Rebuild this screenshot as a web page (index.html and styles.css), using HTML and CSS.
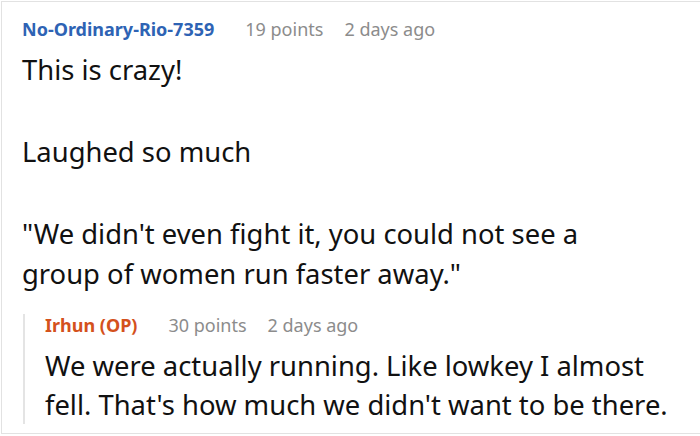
FILE: index.html
```html
<!DOCTYPE html>
<html>
<head>
<meta charset="utf-8">
<link rel="stylesheet" href="styles.css">
</head>
<body>
<div class="frame">
  <div class="comment">
    <div class="meta">
      <span class="author">No-Ordinary-Rio-7359</span>
      <span class="points">19 points</span>
      <span class="time">2 days ago</span>
    </div>
    <div class="body">
      <p>This is crazy!</p>
      <p>Laughed so much</p>
      <p>"We didn't even fight it, you could not see a group of women run faster away."</p>
    </div>
    <div class="reply">
      <div class="meta">
        <span class="author op">Irhun (OP)</span>
        <span class="points">30 points</span>
        <span class="time">2 days ago</span>
      </div>
      <div class="body">
        <p>We were actually running. Like lowkey I almost fell. That's how much we didn't want to be there.</p>
      </div>
    </div>
  </div>
</div>
</body>
</html>
```
FILE: styles.css
```css
html, body {
  margin: 0;
  padding: 0;
  background: #fff;
}
body {
  font-family: "Noto Sans", "Open Sans", sans-serif;
  color: #111;
  overflow: hidden;
}
.frame {
  margin: 1px 0 0 1px;
  width: 699px;
  height: 433px;
  border: 1px solid #e2e2e2;
  border-right: none;
  box-sizing: border-box;
  overflow: hidden;
}
.comment {
  padding: 16px 0 0 20px;
}
.meta {
  display: flex;
  align-items: baseline;
  font-size: 18px;
  line-height: 22px;
  white-space: nowrap;
}
.author {
  font-weight: 700;
  color: #2e63b4;
  margin-right: 31px;
}
.author.op {
  color: #d4511c;
}
.points {
  color: #8c8c8c;
  margin-right: 21px;
}
.time {
  color: #8c8c8c;
}
.body {
  font-size: 27.4px;
  line-height: 40px;
  width: 620px;
  margin-top: 10px;
}
.body p {
  margin: 0 0 42px 0;
}
.body p:last-child {
  margin-bottom: 0;
}
.reply {
  margin: 20px 0 0 1px;
  border-left: 2px solid #e4e4e4;
  padding-left: 20px;
}
.reply .body {
  width: 640px;
  margin-top: 10px;
  margin-bottom: -6px;
  line-height: 39px;
}
```
